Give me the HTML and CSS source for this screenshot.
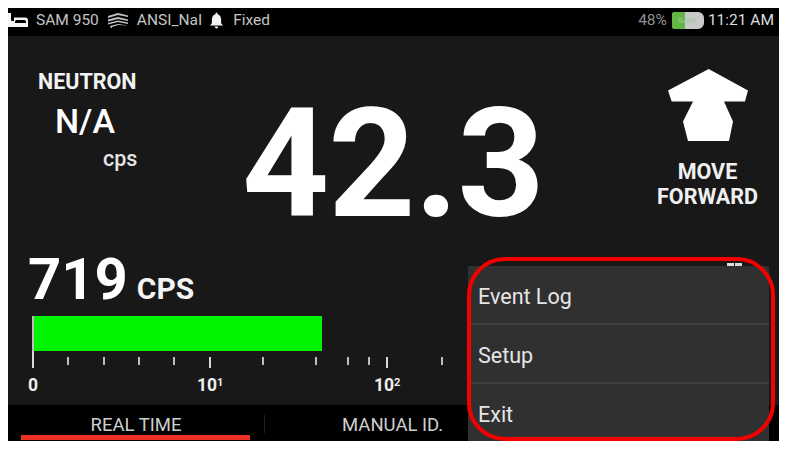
FILE: index.html
```html
<!DOCTYPE html>
<html lang="en">
<head>
<meta charset="utf-8">
<title>Detector</title>
<link rel="stylesheet" href="styles.css">
</head>
<body>
<div class="app">
  <header class="status">
    <div class="status-left">
      <svg class="ico-bed" viewBox="0 0 20 15"><path d="M0 0h3v7q0 1 1 1h2V4.500h11q3 0 3 3V14H0z M7 8.500v1.500h11V8.500q0-1.500-1.500-1.500H8.500Q7 7 7 8.500z" fill="#f4f4f4" fill-rule="evenodd"/></svg>
      <span>SAM 950</span>
      <svg class="ico-lib" viewBox="0 0 22 16"><path d="M1 4L11 1l10 2.500v1.500L11 3 1 6zM1 7.500L11 5l10 2.500V9L11 7 1 9.500zM1 11l10-2.500 10 2V12l-10-2-10 2.500zM3 14l8-2 10 1.500-10-.5-6 2v1H4z" fill="#c2c2c2"/></svg>
      <span>ANSI_NaI</span>
      <svg class="ico-bell" viewBox="0 0 14 17"><path d="M7 0q1.200 0 1.200 1.800Q12 3 12 8v3.500l2 2.500H0l2-2.500V8q0-5 3.800-6.200Q5.800 0 7 0zM5 15h4q-.5 2-2 2t-2-2z" fill="#f4f4f4"/></svg>
      <span>Fixed</span>
    </div>
    <div class="status-right">
      <span class="pct">48%</span>
      <span class="battery"><span class="battery-fill"></span><span class="battery-label">SAM</span></span>
      <span class="clock">11:21 AM</span>
    </div>
  </header>

  <main class="main">
    <section class="top">
      <div class="neutron">
        <div class="neutron-title">NEUTRON</div>
        <div class="neutron-value">N/A</div>
        <div class="neutron-unit">cps</div>
      </div>
      <div class="big">42.3</div>
      <div class="move">
        <svg class="arrow" viewBox="0 0 80 72"><path d="M40.700 0L80 21.500L77 32.500L56 32.500L65 52.500L61 72H20L15 52.500L25 32.500L3.700 32.500L0 21.500Z" fill="#fff"/></svg>
        <div class="move-text">MOVE<br>FORWARD</div>
      </div>
    </section>

    <section class="gauge">
      <div class="reading"><span class="reading-num">719</span><span class="reading-unit">CPS</span></div>
      <div class="bar"><div class="bar-fill"></div></div>
      <div class="ticks">
        <i class="t major" style="left:0"></i>
        <i class="t" style="left:35px"></i>
        <i class="t" style="left:71px"></i>
        <i class="t" style="left:106px"></i>
        <i class="t" style="left:141px"></i>
        <i class="t major" style="left:177px"></i>
        <i class="t" style="left:230px"></i>
        <i class="t" style="left:283px"></i>
        <i class="t" style="left:315px"></i>
        <i class="t" style="left:336px"></i>
        <i class="t major" style="left:354px"></i>
        <i class="t" style="left:409px"></i>
      </div>
      <div class="labels">
        <span class="lab lab0">0</span>
        <span class="lab lab1">10<sup>1</sup></span>
        <span class="lab lab2">10<sup>2</sup></span>
      </div>
    </section>
  </main>

  <nav class="tabs">
    <div class="tab tab-active">REAL TIME</div>
    <div class="tab tab-second">MANUAL ID.</div>
  </nav>

  <div class="peek"></div>
  <ul class="menu">
    <li>Event Log</li>
    <li>Setup</li>
    <li>Exit</li>
  </ul>
  <div class="ring"></div>
</div>
</body>
</html>
```
FILE: styles.css
```css
* { box-sizing: border-box; }
html, body { height: 100%; }
body {
  margin: 0;
  padding: 8px 8px 10px;
  background: #fff;
  font-family: Roboto, "Liberation Sans", sans-serif;
  overflow: hidden;
}
.app {
  position: relative;
  width: 771px;
  height: 433px;
  display: flex;
  flex-direction: column;
  background: #181818;
  color: #fff;
}
.status {
  height: 28px;
  background: #000;
  display: flex;
  align-items: center;
  justify-content: space-between;
  padding: 0 5px 4px 0;
  font-size: 15.5px;
  color: #c4c4c4;
}
.status-left, .status-right { display: flex; align-items: center; }
.ico-bed { width: 20px; height: 15px; margin-right: 8px; }
.ico-lib { width: 22px; height: 16px; margin: 0 8px; }
.ico-bell { width: 13px; height: 17px; margin: 0 10px 0 8px; }
.pct { color: #8f8f8f; margin-right: 5px; }
.battery {
  position: relative;
  width: 32px;
  height: 17px;
  border-radius: 3px 6px 6px 3px;
  background: #c9c9c9;
  overflow: hidden;
  margin-right: 4px;
}
.battery-fill {
  position: absolute;
  left: 0; top: 0; bottom: 0;
  width: 13px;
  background: #63b845;
}
.battery-label {
  position: absolute;
  left: 6px; top: 4px;
  font-size: 8px;
  line-height: 9px;
  color: #a3c99a;
}
.clock { color: #dcdcdc; }

.main { flex: 1; display: flex; flex-direction: column; min-height: 0; }
.top { height: 205px; display: flex; position: relative; }
.neutron { width: 234px; padding-top: 34px; font-weight: 700; }
.neutron-title { font-size: 21.5px; line-height: 24px; margin-left: 30px; color: #f2f2f2; }
.neutron-value { font-size: 34px; line-height: 40px; margin: 7px 0 0 47px; font-weight: 500; }
.neutron-unit { font-size: 21.5px; line-height: 22px; margin: 7px 0 0 95px; color: #e4e4e4; font-weight: 500; }
.big {
  width: 400px;
  font-size: 152px;
  line-height: 152px;
  font-weight: 700;
  padding-top: 52px;
  height: 205px;
  letter-spacing: -1px;
}
.move {
  flex: 1;
  padding-top: 33px;
  display: flex;
  flex-direction: column;
  align-items: center;
  margin-left: -6px;
}
.arrow { width: 80px; height: 72px; }
.move-text {
  margin-top: 18px;
  font-size: 21.5px;
  line-height: 25px;
  font-weight: 700;
  text-align: center;
  color: #f0f0f0;
}

.gauge { position: relative; flex: 1; padding-left: 20px; }
.reading { height: 75px; padding-top: 6px; display: flex; align-items: baseline; }
.reading-num { font-size: 58px; line-height: 64px; font-weight: 700; }
.reading-unit { font-size: 30px; font-weight: 700; margin-left: 9px; color: #f4f4f4; }
.bar { margin-left: 4px; width: 290px; height: 35px; }
.bar-fill { height: 100%; background: #00f300; border-left: 2px solid #bcbcbc; }
.ticks { position: relative; height: 17px; margin-left: 4px; }
.t {
  position: absolute;
  top: 6px;
  width: 2px;
  height: 8px;
  background: #bdbdbd;
}
.t.major { height: 11px; top: 6px; background: #d8d8d8; }
.t:first-child { top: 0; height: 17px; }
.labels { position: relative; height: 20px; font-size: 17.5px; font-weight: 700; color: #eee; }
.lab { position: absolute; top: 7px; line-height: 20px; }
.lab sup { font-size: 11px; line-height: 0; vertical-align: 5px; }
.lab0 { left: 0; }
.lab1 { left: 169px; }
.lab2 { left: 346px; }

.tabs {
  height: 36px;
  background: #000;
  display: flex;
  font-size: 18.5px;
  color: #cfcfcf;
}
.tab { line-height: 41px; text-align: center; }
.tab-active {
  position: relative;
  width: 256px;
}
.tab-active::after {
  content: "";
  position: absolute;
  left: 13px; right: 14px; bottom: 1px;
  height: 5px;
  background: #ee3124;
}
.tab-second {
  position: relative;
  flex: 1;
  text-align: left;
  padding-left: 78px;
}
.tab-second::before {
  content: "";
  position: absolute;
  left: 0; top: 10px;
  height: 18px;
  width: 1px;
  background: #222;
}

.peek {
  position: absolute;
  left: 719px; top: 255px;
  width: 15px; height: 3px;
  background: linear-gradient(90deg, #ddd 45%, transparent 45%, transparent 55%, #ddd 55%);
}
.menu {
  position: absolute;
  left: 460px; top: 258px;
  right: 10px; bottom: 0;
  margin: 0; padding: 0;
  list-style: none;
  background: #303030;
  color: #e6e6e6;
  font-size: 21.5px;
}
.menu li {
  height: 59px;
  padding: 13px 0 0 10px;
  line-height: 36px;
  border-bottom: 2px solid #404040;
}
.menu li:last-child { border-bottom: 0; }
.ring {
  position: absolute;
  left: 459px; top: 249px;
  width: 308px; height: 184px;
  border: 4px solid #f40000;
  border-radius: 38px;
}
```
